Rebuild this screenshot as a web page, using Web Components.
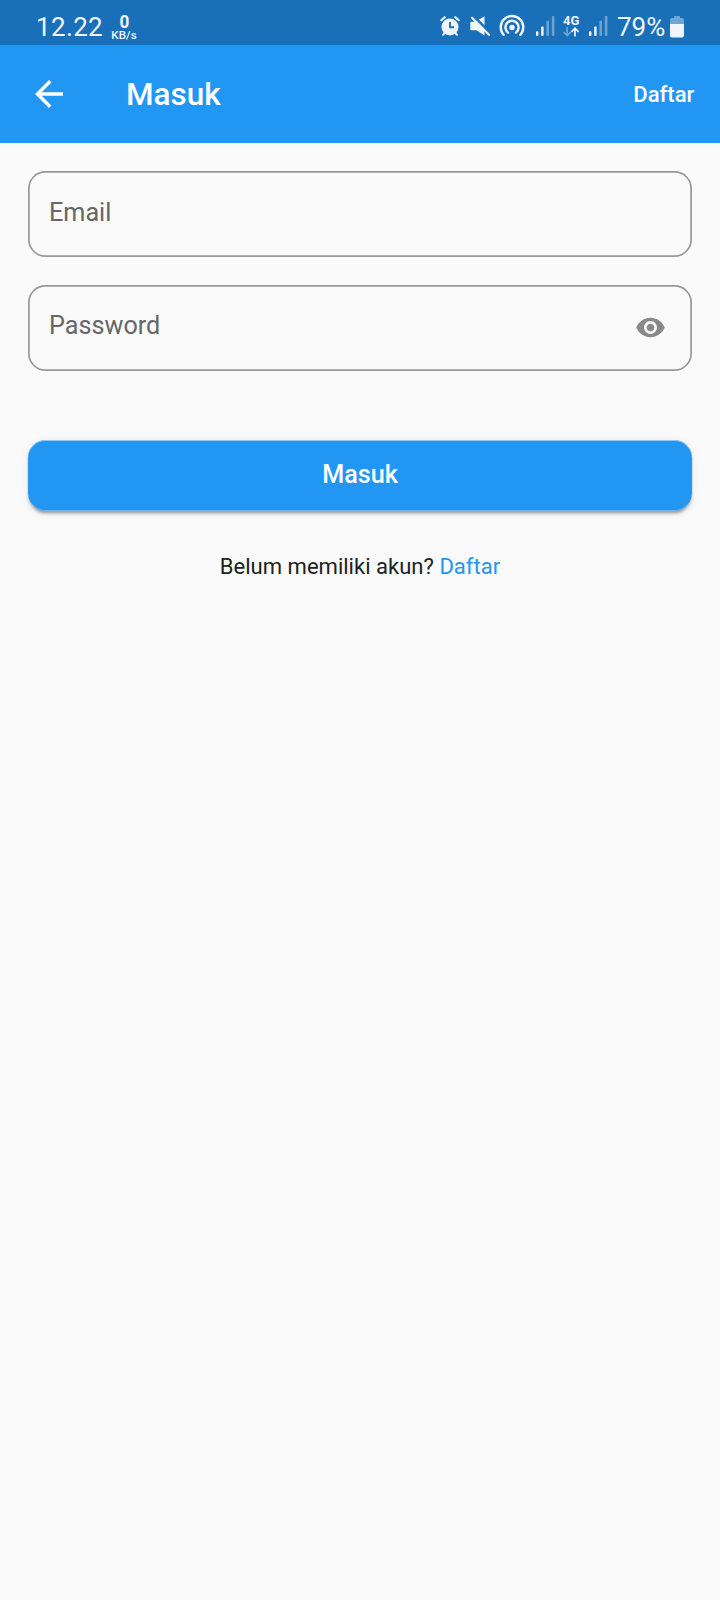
<!DOCTYPE html>
<html lang="id">
<head>
<meta charset="utf-8">
<title>Masuk</title>
<style>
html,body{margin:0;background:#fafafa}
body{font-family:Roboto,"Liberation Sans",sans-serif;color:#212121}
</style>
</head>
<body>
<login-screen></login-screen>
<script>
function define(name, html) {
  const tpl = document.createElement('template');
  tpl.innerHTML = html;
  customElements.define(name, class extends HTMLElement {
    constructor() {
      super();
      this.attachShadow({mode: 'open'}).append(tpl.content.cloneNode(true));
    }
  });
}

define('signal-bars', `
<style>:host{display:block;width:19px;height:20px}svg{display:block}</style>
<svg width="19" height="20" fill="#f0f5fc"><rect x="0" y="15.2" width="2.4" height="4.8" rx=".8"/><rect x="5.2" y="10.4" width="2.4" height="9.6" rx=".8"/><g opacity=".38"><rect x="10.4" y="4.8" width="2.6" height="15.2" rx=".8"/><rect x="15.8" y="0" width="2.6" height="20" rx=".8"/></g></svg>`);

define('status-bar', `
<style>
:host{display:flex;box-sizing:border-box;height:45px;padding:14px 36px 0 36px;background:#1a70b8;color:#f0f5fc;align-items:flex-start}
.time{font-size:26px;line-height:26px;letter-spacing:.35px;width:75px}
.rate{display:flex;flex-direction:column;align-items:center;width:26px}
.n{font-size:19px;line-height:16px;font-weight:700;transform:scaleX(.9)}
.u{font:500 11.5px/11px Roboto,sans-serif;letter-spacing:.1px}
.icons{display:flex;margin-left:auto;height:26px}
svg{display:block}
.alarm{margin:2px 10px 0 0}.mute{margin:2px 8px 0 0}.hot{margin-right:11px}
signal-bars{margin-top:2px}
.net{width:17px;margin:0 9px 0 8px}
.g{font-size:13px;line-height:13px;font-weight:700;display:block}
.pct{font-size:26px;line-height:26px;width:53px;margin-left:9px}
.bat{margin-top:2px}
</style>
<div class="time">12.22</div>
<div class="rate"><span class="n">0</span><span class="u">KB/s</span></div>
<div class="icons">
<svg class="alarm" width="20" height="20" fill="none" stroke="#f0f5fc" stroke-linecap="round"><circle cx="10" cy="11" r="8.5" fill="#f0f5fc" stroke="none"/><path d="M1.3 4.2 4.7 1.2M18.7 4.2 15.3 1.2" stroke-width="2.2"/><path d="M4.5 17 3 18.8M15.5 17 17 18.8" stroke-width="2"/><path d="M10 6v5.3h4" stroke="#1a70b8" stroke-width="1.9" stroke-linecap="butt"/></svg>
<svg class="mute" width="21" height="20"><path d="M1.2 5.8H5L14.5 0.3V19.5L6.5 14.2H1.2Q.3 14.2.3 13.3V6.7Q.3 5.8 1.2 5.8Z" fill="#f0f5fc"/><path d="M3.5 0 21 17.5" stroke="#1a70b8" stroke-width="2.5"/><path d="M2 1.7 19 18.8" stroke="#f0f5fc" stroke-width="2.1" stroke-linecap="round"/></svg>
<svg class="hot" width="26" height="23" fill="none" stroke="#f0f5fc" stroke-width="2.4" stroke-linecap="round"><circle cx="13" cy="13.5" r="2.7" fill="#f0f5fc" stroke="none"/><path d="M9 18.6a6.6 6.6 0 1 1 8 0M4.6 20.8a11.3 11.3 0 1 1 16.8 0"/></svg>
<signal-bars></signal-bars>
<div class="net"><span class="g">4G</span><svg width="17" height="10" fill="none" stroke="#f0f5fc" stroke-width="1.7"><path d="M4.2 0v8.3M.6 5 4.2 8.5 7.8 5" opacity=".4"/><path d="M12 9.5V1.3M8.4 4.8 12 1.2 15.6 4.8"/></svg></div>
<signal-bars></signal-bars>
<div class="pct">79%</div>
<svg class="bat" width="14" height="22"><path d="M4 2V1q0-1 1-1h4q1 0 1 1v1h2q2 0 2 2v4H0V4q0-2 2-2Z" fill="#f0f5fc" opacity=".4"/><path d="M0 8h14v11.5q0 2-2 2H2q-2 0-2-2Z" fill="#f0f5fc"/></svg>
</div>`);

define('app-bar', `
<style>
:host{display:flex;align-items:center;box-sizing:border-box;height:98px;padding:0 25.6px 0 28px;background:#2196f3;color:#fff}
svg{display:block;width:42px;height:42px;margin-right:56px}
.t{font-size:31.5px;font-weight:500;flex:1}
.a{font-size:22.05px;font-weight:500}
</style>
<svg viewBox="0 0 24 24" fill="#fff"><path d="M20 11H7.83l5.59-5.59L12 4l-8 8 8 8 1.41-1.41L7.83 13H20v-2z"/></svg>
<div class="t"><slot></slot></div><div class="a"><slot name="action"></slot></div>`);

define('text-field', `
<style>
:host{display:flex;justify-content:space-between;box-sizing:border-box;height:86px;padding:0 26px 0 21px;border-radius:17.5px;box-shadow:inset 0 0 0 1.75px #999;color:#666}
.l{font-size:25.2px;line-height:30px;margin-top:var(--label-top,27px)}
</style>
<div class="l"><slot></slot></div><slot name="icon"></slot>`);

define('eye-icon', `
<style>:host{display:block;margin-top:26.5px}svg{display:block}</style>
<svg width="31" height="31" viewBox="0 0 24 24" fill="#898989"><path d="M12 4.5C7 4.5 2.73 7.61 1 12c1.73 4.39 6 7.5 11 7.5s9.27-3.11 11-7.5c-1.73-4.39-6-7.5-11-7.5zM12 17c-2.76 0-5-2.24-5-5s2.24-5 5-5 5 2.24 5 5-2.24 5-5 5zm0-8c-1.66 0-3 1.34-3 3s1.34 3 3 3 3-1.34 3-3-1.34-3-3-3z"/></svg>`);

define('primary-button', `
<style>
:host{display:block;box-sizing:border-box;height:71px;padding-top:20px;border-radius:17.5px;background:#2196f3;color:#fff;text-align:center;font-size:25.2px;line-height:30px;font-weight:500;
box-shadow:inset 0 1px rgba(250,250,250,.5),inset 0 -1px rgba(205,205,205,.5),0 5px 2px -3.5px rgba(0,0,0,.2),0 3px 3.5px rgba(0,0,0,.14),0 1.75px 8px rgba(0,0,0,.08)}
</style><slot></slot>`);

define('login-screen', `
<style>
:host{display:block;min-height:1600px;background:#fafafa}
main{display:flex;flex-direction:column;padding:28px 28px 0}
text-field+text-field{margin-top:28px;--label-top:26px}
primary-button{margin-top:69px}
p{margin:41px 0 0;text-align:center;font-size:22.05px;line-height:30px}
a{color:#2196f3}
</style>
<status-bar></status-bar>
<app-bar>Masuk<span slot="action">Daftar</span></app-bar>
<main>
<text-field>Email</text-field>
<text-field>Password<eye-icon slot="icon"></eye-icon></text-field>
<primary-button>Masuk</primary-button>
<p>Belum memiliki akun? <a>Daftar</a></p>
</main>`);
</script>
</body>
</html>
